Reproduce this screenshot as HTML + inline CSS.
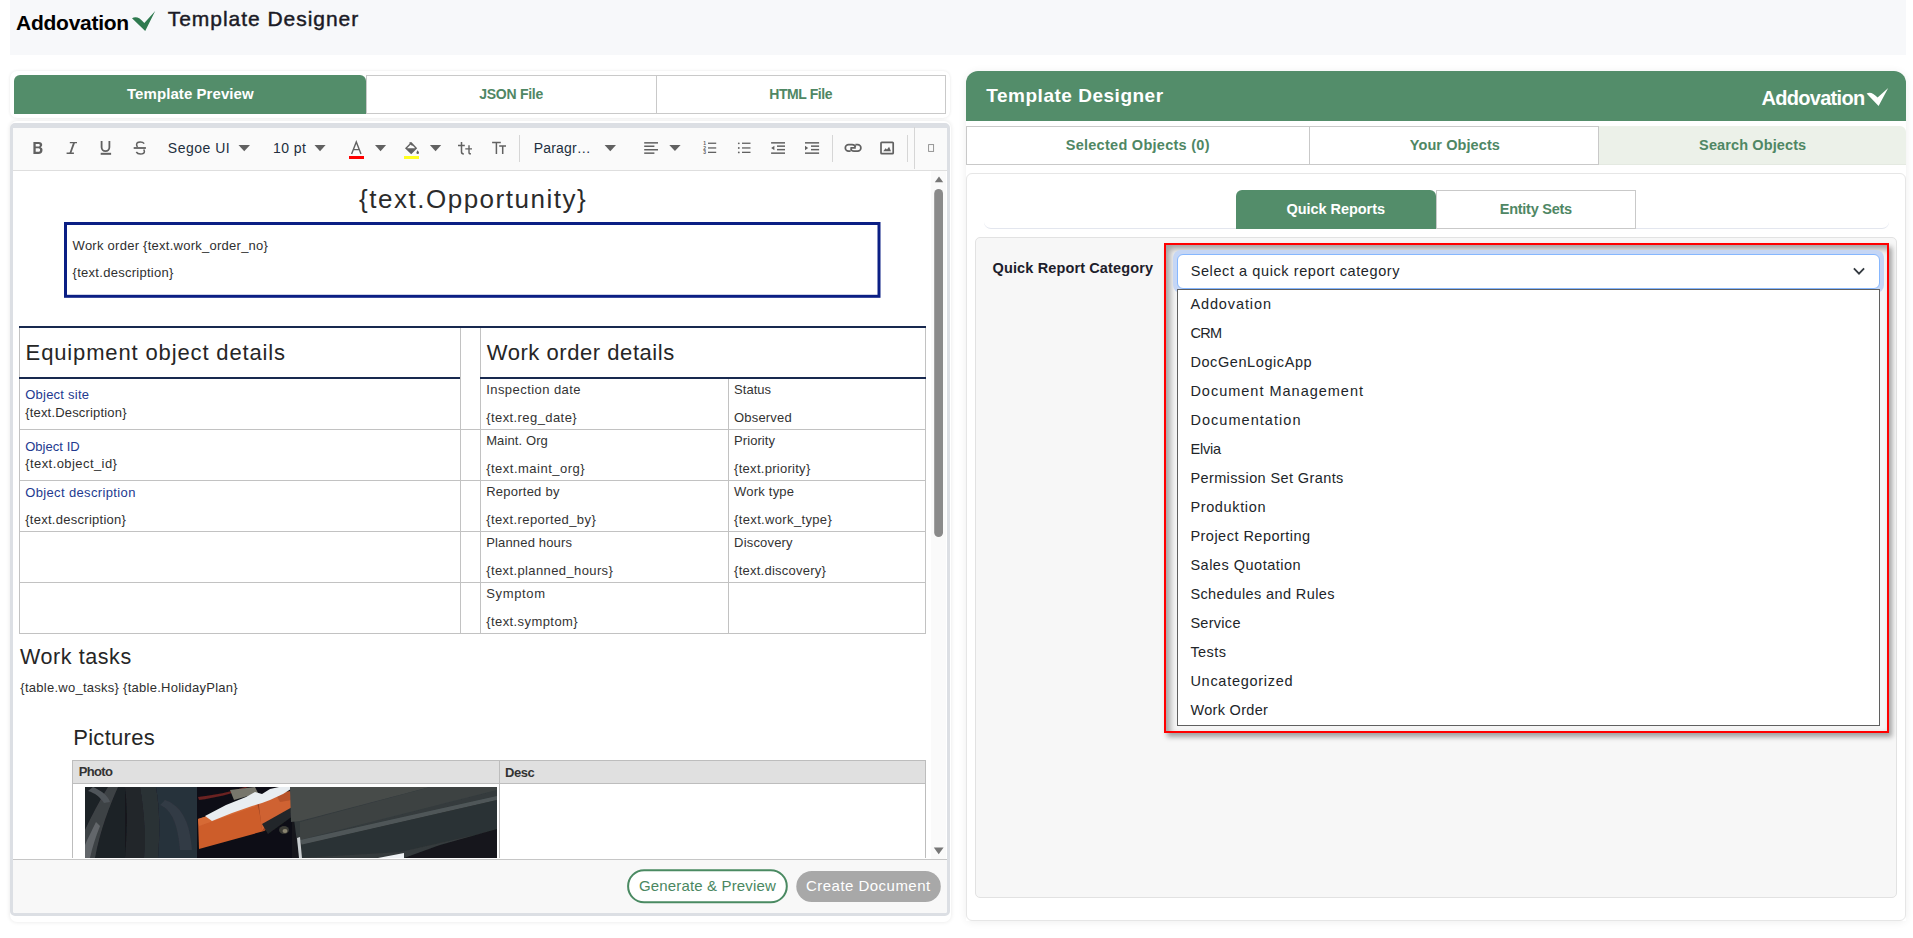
<!DOCTYPE html>
<html><head><meta charset="utf-8">
<style>
html,body{margin:0;padding:0;width:1913px;height:938px;overflow:hidden;background:#fff;font-family:"Liberation Sans",sans-serif;}
.a{position:absolute;box-sizing:border-box;}
.tx{position:absolute;white-space:pre;line-height:1;z-index:50;font-family:"Liberation Sans",sans-serif;}
#ov{position:absolute;left:0;top:0;z-index:40;}
</style></head><body>
<!-- header -->
<div class="a" style="left:10px;top:0;width:1896px;height:55px;background:#f7f8fa;"></div>

<!-- LEFT: tab card -->
<div class="a" style="left:10px;top:71px;width:940px;height:47px;background:#fff;border-radius:7px;box-shadow:0 0 3px rgba(0,0,0,.10);"></div>
<div class="a" style="left:14px;top:75px;width:352px;height:39px;background:#538d6a;border-radius:6px 6px 0 0;"></div>
<div class="a" style="left:366px;top:75px;width:291px;height:39px;border:1px solid #c9c9c9;background:#fff;"></div>
<div class="a" style="left:656px;top:75px;width:290px;height:39px;border:1px solid #c9c9c9;background:#fff;"></div>

<!-- LEFT: editor card -->
<div class="a" style="left:10px;top:121px;width:941px;height:801px;background:#fff;border-radius:7px;box-shadow:0 0 4px rgba(0,0,0,.10);"></div>
<div class="a" style="left:10px;top:123px;width:940px;height:793px;border:3px solid #dcdfe4;border-top-width:5px;border-radius:5px;background:#fff;overflow:hidden;">
  <div class="a" style="left:0;top:0;width:934px;height:43px;background:#fafafa;border-bottom:1px solid #dedede;"></div>
  <div class="a" style="left:918px;top:43px;width:15px;height:688px;background:#fafafa;"></div>
  <div class="a" style="left:0;top:731px;width:934px;height:60px;background:#f8f8f8;border-top:1px solid #c6c6c6;"></div>
</div>

<!-- RIGHT -->
<div class="a" style="left:966px;top:71px;width:940px;height:850px;border-radius:12px 12px 6px 6px;box-shadow:0 1px 8px rgba(0,0,0,.07);"></div>
<div class="a" style="left:966px;top:71px;width:940px;height:50px;background:#538d6a;border-radius:12px 12px 0 0;"></div>
<div class="a" style="left:966px;top:121px;width:940px;height:800px;background:#fff;"></div>
<div class="a" style="left:966px;top:126px;width:344px;height:39px;border:1px solid #c9c9c9;background:#fff;"></div>
<div class="a" style="left:1309px;top:126px;width:290px;height:39px;border:1px solid #c9c9c9;background:#fff;"></div>
<div class="a" style="left:1599px;top:126px;width:307px;height:39px;background:#ecf1e9;border-radius:0 6px 0 0;border-bottom:1px solid #e4e9e1;"></div>

<div class="a" style="left:966px;top:173px;width:940px;height:748px;border:1px solid #e6e6e6;border-radius:6px;background:#fff;"></div>
<div class="a" style="left:984px;top:180px;width:905px;height:49px;border-bottom:1px solid #e3e6ee;border-radius:0 0 7px 7px;"></div>
<div class="a" style="left:1236px;top:190px;width:200px;height:39px;background:#538d6a;border-radius:6px 6px 0 0;"></div>
<div class="a" style="left:1436px;top:190px;width:200px;height:39px;border:1px solid #c9c9c9;background:#fff;"></div>

<div class="a" style="left:975px;top:237px;width:922px;height:661px;border:1px solid #e2e2e2;border-radius:5px;background:#f7f7f7;"></div>

<!-- red annotation box with dropdown -->
<div class="a" style="left:1164px;top:243px;width:725px;height:490px;border:2px solid #ff0000;background:#f5f5f5;box-shadow:3px 4px 5px rgba(0,0,0,.35), inset 4px 4px 6px rgba(0,0,0,.35);"></div>
<div class="a" style="left:1173px;top:250px;width:711px;height:43px;border-radius:8px;background:#c5d6f5;"></div>
<div class="a" style="left:1177px;top:254px;width:703px;height:35px;border:1px solid #86b7fe;border-radius:6px;background:#fff;"></div>
<div class="a" style="left:1177px;top:289px;width:703px;height:437px;border:1px solid #5f5f5f;background:#fff;"></div>

<svg id="ov" width="1913" height="938" viewBox="0 0 1913 938">
 <!-- logo check -->
 <path d="M132,18.3 C135.5,16.2 139.5,17.2 144.3,23 L155.2,11 L145.2,31 Z" fill="#2f7a4f"/>
 <!-- right logo check (white) -->
 <path d="M1866.6,93.6 C1869.6,91.8 1873,92.6 1877.6,97.6 L1888.2,88 L1878.6,106 Z" fill="#fff"/>

 <!-- toolbar icons -->
 <g fill="none" stroke="#616161" stroke-width="1.5">
  <!-- I -->
  <path d="M69.8,142.6 H77 M66.6,153.2 H73.9" stroke-width="1.4"/><path d="M74.1,142.6 L70.3,153.2" stroke-width="1.8"/>
  <!-- U -->
  <path d="M101.6,141 V147.3 A3.9,3.9 0 0 0 109.4,147.3 V141" stroke-width="1.8"/>
  <!-- S -->
  <path d="M144.2,143.7 C143.4,142.5 142.1,142 140.2,142 C138,142 136.6,143.1 136.6,144.7 C136.6,145.6 137,146.3 137.6,146.9" stroke-width="1.5"/>
  <path d="M143.6,149.6 C144.1,150.2 144.4,150.8 144.4,151.4 C144.4,153 143,153.9 140.4,153.9 C138.5,153.9 137.1,153.3 136.3,152" stroke-width="1.5"/>
  <!-- A -->
  <path d="M351.6,154 L356.3,142 L361,154 M353.2,149.6 H359.4" stroke-width="1.4"/>
  <!-- bucket -->
  <path d="M409.6,142.4 L412.6,145.4 M406,148.3 L411.3,143.1 L416.2,148.2 L411.2,153.2 Z" stroke-width="1.4"/>
  <!-- tt -->
  <path d="M461.5,141.9 V152 C461.5,153.3 462.3,153.9 463.8,153.9 M458,145.4 H464.8" stroke-width="1.5"/>
  <path d="M469,145.2 V152.4 C469,153.4 469.7,153.9 471,153.9 M465.3,148.9 H472" stroke-width="1.4"/>
  <!-- TT -->
  <path d="M492.1,142.6 H500.8 M496.4,142.6 V154 M499.2,146.1 H506 M502.7,146.1 V154" stroke-width="1.5"/>
  <!-- link -->
  <path d="M850.6,151.2 h-2 a3.3,3.3 0 0 1 0,-6.6 h3.6 a3.3,3.3 0 0 1 3.2,2.6 M855.4,144.6 h2.2 a3.3,3.3 0 0 1 0,6.6 h-3.6 a3.3,3.3 0 0 1 -3.2,-2.6 M850.4,147.9 h5.4" stroke-width="1.7"/>
  <!-- image -->
  <rect x="881" y="142.3" width="12.2" height="11.4" rx="0.8" stroke-width="1.7"/>
  <!-- small rect -->
  <rect x="928.6" y="144.6" width="5" height="6.8" stroke="#8a8a8a" stroke-width="0.9"/>
 </g>
 <g fill="#616161">
  <!-- B -->
  <path fill-rule="evenodd" d="M33.4,141.9 H38.8 C41,141.9 42.2,143 42.2,144.8 C42.2,146 41.6,146.8 40.6,147.2 C41.9,147.6 42.5,148.6 42.5,149.9 C42.5,152.3 41,153.9 38.4,153.9 H33.4 Z M35.7,143.9 V146.5 H38.4 C39.3,146.5 39.8,146 39.8,145.2 C39.8,144.4 39.3,143.9 38.4,143.9 Z M35.7,148.3 V151.8 H38.5 C39.5,151.8 40.1,151.1 40.1,150 C40.1,149 39.5,148.3 38.5,148.3 Z"/>
  <!-- underline -->
  <rect x="100.7" y="152.8" width="10.4" height="2"/>
  <!-- strike -->
  <rect x="133.7" y="147.1" width="12.2" height="1.8"/>
  <!-- carets -->
  <path d="M238.5,144.9 H250 L244.25,151.2 Z"/>
  <path d="M314.5,144.9 H325.6 L320.05,151.2 Z"/>
  <path d="M375,144.9 H386.1 L380.55,151.2 Z"/>
  <path d="M429.9,144.9 H441.2 L435.55,151.2 Z"/>
  <path d="M604.6,144.9 H616 L610.3,151.2 Z"/>
  <path d="M669.3,145 H680.6 L674.95,150.9 Z"/>
  <!-- bucket fill + drop -->
  <path d="M406.3,148.3 H416 L411.2,153.1 Z"/>
  <path d="M417.6,150.2 C418.8,151.6 419,152.4 419,152.8 A1.3,1.3 0 0 1 416.4,152.8 C416.4,152.4 416.6,151.6 417.6,150.2 Z"/>
  <!-- align -->
  <rect x="644.2" y="142.1" width="13.8" height="1.5"/><rect x="644.2" y="145.5" width="10.2" height="1.5"/>
  <rect x="644.2" y="149" width="13.8" height="1.5"/><rect x="644.2" y="152.4" width="10.2" height="1.5"/>
  <!-- OL -->
  <rect x="708" y="142.6" width="8.2" height="1.3"/><rect x="708" y="147.3" width="8.2" height="1.3"/><rect x="708" y="151.7" width="8.2" height="1.3"/>
  <text x="703.3" y="145.3" font-size="5" font-weight="700" font-family="Liberation Sans">1</text>
  <text x="703.3" y="149.8" font-size="5" font-weight="700" font-family="Liberation Sans">2</text>
  <text x="703.3" y="154.3" font-size="5" font-weight="700" font-family="Liberation Sans">3</text>
  <!-- UL -->
  <circle cx="738.8" cy="143.3" r="0.9"/><circle cx="738.8" cy="148" r="0.9"/><circle cx="738.8" cy="152.4" r="0.9"/>
  <rect x="742" y="142.6" width="8.5" height="1.3"/><rect x="742" y="147.3" width="8.5" height="1.3"/><rect x="742" y="151.7" width="8.5" height="1.3"/>
  <!-- outdent -->
  <rect x="771.1" y="142.1" width="13.9" height="1.5"/><rect x="777" y="145.4" width="8" height="1.5"/>
  <rect x="777" y="148.9" width="8" height="1.5"/><rect x="771.1" y="152.4" width="13.9" height="1.5"/>
  <path d="M771.2,148 L774.4,145.8 V150.2 Z"/>
  <!-- indent -->
  <rect x="805" y="142.1" width="14.1" height="1.5"/><rect x="811" y="145.4" width="8.1" height="1.5"/>
  <rect x="811" y="148.9" width="8.1" height="1.5"/><rect x="805" y="152.4" width="14.1" height="1.5"/>
  <path d="M808.2,148 L805,145.8 V150.2 Z"/>
  <!-- image mountains -->
  <path d="M883.2,151.3 L885.6,148.3 L887,149.6 L889.1,146.8 L891,151.3 Z"/>
 </g>
 <!-- color bars -->
 <rect x="349" y="156" width="15" height="3" fill="#ff0000"/>
 <rect x="404" y="156" width="15" height="3" fill="#ffff20"/>
 <!-- separators -->
 <g fill="#d6d6d6">
  <rect x="519" y="135" width="1" height="27"/>
  <rect x="832" y="135" width="1" height="27"/>
  <rect x="907" y="135" width="1" height="27"/>
  <rect x="914" y="127" width="1" height="42"/>
 </g>
 <!-- scrollbar -->
 <path d="M934.8,182.3 H943.2 L939,176.6 Z" fill="#777"/>
 <rect x="934.2" y="189" width="8.8" height="348" rx="4.4" fill="#8a8a8a"/>
 <path d="M933.8,847.4 H943.6 L938.7,854.2 Z" fill="#777"/>

 <!-- chevron -->
 <path d="M1853.9,268.3 L1859,273.6 L1864.1,268.3" fill="none" stroke="#343a40" stroke-width="1.8"/>

 <!-- content: navy box -->
 <rect x="65.5" y="223.5" width="813.5" height="72.8" fill="none" stroke="#0b1f84" stroke-width="3"/>

 <!-- table -->
 <g fill="#c2c2c2">
  <rect x="19" y="327" width="1" height="307"/>
  <rect x="460" y="327" width="1" height="307"/>
  <rect x="480" y="327" width="1" height="307"/>
  <rect x="925" y="327" width="1" height="307"/>
  <rect x="728" y="379" width="1" height="255"/>
  <rect x="19" y="429" width="907" height="1"/>
  <rect x="19" y="480" width="907" height="1"/>
  <rect x="19" y="531" width="907" height="1"/>
  <rect x="19" y="582" width="907" height="1"/>
  <rect x="19" y="633" width="907" height="1"/>
 </g>
 <g fill="#18294f">
  <rect x="19" y="326" width="907" height="2"/>
  <rect x="19" y="377" width="441" height="2"/>
  <rect x="480" y="377" width="446" height="2"/>
 </g>

 <!-- pictures table -->
 <rect x="72" y="760" width="854" height="24" fill="#e0e0e0"/>
 <g fill="#bdbdbd">
  <rect x="72" y="760" width="854" height="1"/>
  <rect x="72" y="783" width="854" height="1"/>
  <rect x="72" y="760" width="1" height="98"/>
  <rect x="499" y="760" width="1" height="98"/>
  <rect x="925" y="760" width="1" height="98"/>
 </g>
 <!-- photo -->
 <defs>
  <filter id="bl" x="-5%" y="-5%" width="110%" height="110%"><feGaussianBlur stdDeviation="0.7"/></filter><clipPath id="pc"><rect x="85" y="787" width="412" height="71"/></clipPath>
  <linearGradient id="lg1" x1="0" y1="0" x2="1" y2="0">
   <stop offset="0" stop-color="#1b1e23"/><stop offset="0.5" stop-color="#30343a"/><stop offset="1" stop-color="#181b20"/>
  </linearGradient>
 </defs>
 <g clip-path="url(#pc)"><g filter="url(#bl)">
  <rect x="85" y="787" width="412" height="71" fill="#14171c"/>
  <!-- left wheel area -->
  <rect x="85" y="787" width="40" height="71" fill="#1d2126"/>
  <path d="M85,858 L85,830 C92,815 100,800 108,787 L118,787 C110,805 100,830 95,858 Z" fill="#3e4245"/>
  <path d="M85,858 L85,845 C88,838 92,830 96,822 L100,826 C96,836 92,848 90,858 Z" fill="#62666a"/>
  <path d="M125,787 H140 C144,810 146,835 144,858 H125 C127,835 128,810 125,787 Z" fill="#23272b"/>
  <path d="M140,787 H156 C160,810 160,835 158,858 H144 C146,835 144,810 140,787 Z" fill="#2c3136"/>
  <path d="M156,787 H198 V858 H158 C160,835 160,810 156,787 Z" fill="#28303a"/>
  <path d="M165,800 C180,805 190,820 192,850 L180,850 C178,825 172,810 160,805 Z" fill="#323a44"/>
  <path d="M93,787 C100,790 108,795 110,802 L104,803 C100,797 95,793 88,791 Z" fill="#50555a"/>
  <!-- dark middle -->
  <rect x="197" y="787" width="95" height="71" fill="#0d0f15"/>
  <path d="M198,797 C215,795 230,792 245,787 L248,787 C232,794 215,798 199,800 Z" fill="#6a2020"/>
  <!-- orange cylinder -->
  <path d="M198,819 L254,801 L258,797 L272,794 L291,792 L292,808 L276,822 L264,831 L199,849 Z" fill="#cd5d2c"/>
  <path d="M198,819 L254,801 L256,806 L199,826 Z" fill="#d66a36"/>
  <path d="M256,800 C259,808 261,820 262,831 L266,830 C264,818 262,806 259,799 Z" fill="#9e4422"/>
  <path d="M258,797 L291,793 L292,809 L268,822 L262,831 Z" fill="#cf6232"/>
  <path d="M275,793 L291,791 L292,800 L280,802 Z" fill="#b8532a"/>
  <!-- metal fitting -->
  <path d="M230,790 L255,787 L258,793 L234,800 Z" fill="#77766c"/>
  <!-- snow -->
  <path d="M205,816 L226,805 L246,797 L255,792 L262,794 L270,789 L279,787 L294,787 L283,794 L270,800 L262,803 L252,806 L232,813 L212,821 Z" fill="#e8edf1"/>
  <!-- bracket -->
  <path d="M262,824 L294,806 L297,813 L268,834 Z" fill="#232629"/>
  <ellipse cx="284" cy="830" rx="5" ry="4" fill="#3a3a36"/>
  <ellipse cx="285" cy="831" rx="2.5" ry="2" fill="#8a8470"/>
  <!-- right beam -->
  <path d="M290,787 H497 V858 H300 L296,835 Z" fill="#343a3c"/>
  <path d="M290,787 H430 L300,821 L291,822 Z" fill="#474b4a"/>
  <path d="M430,787 H497 V790 L300,840 L300,822 Z" fill="#3c4243"/>
  <path d="M300,840 L497,796 V800 L302,845 Z" fill="#4f5759"/>
  <path d="M300,845 L497,800 V830 L440,843 L400,852 L300,858 Z" fill="#2c3234"/>
  <path d="M404,858 L440,845 L497,829 V858 Z" fill="#16171c"/>
  <path d="M378,858 L404,853 L404,858 Z" fill="#eef1f4"/>
  <path d="M297,838 L300,837 L302,858 L299,858 Z" fill="#c9cdd0"/></g>
 </g>

 <!-- footer buttons -->
 <rect x="628.1" y="870.2" width="158.7" height="32.1" rx="16" fill="#fff" stroke="#4a8a62" stroke-width="2"/>
 <rect x="796.3" y="871" width="144.5" height="31.1" rx="15.5" fill="#a8a8a8"/>
</svg>

<span class="tx" style="left:16.10px;top:12px;font-size:21px;font-weight:700;color:#000;letter-spacing:-0.274px;">Addovation</span>
<span class="tx" style="left:167.70px;top:8px;font-size:21px;font-weight:400;color:#1b1b26;letter-spacing:0.963px;-webkit-text-stroke:0.45px #1b1b26;">Template Designer</span>
<span class="tx" style="left:127.00px;top:86px;font-size:15px;font-weight:700;color:#fff;letter-spacing:0.070px;">Template Preview</span>
<span class="tx" style="left:479.20px;top:87px;font-size:14px;font-weight:700;color:#4f8764;letter-spacing:-0.256px;">JSON File</span>
<span class="tx" style="left:769.30px;top:87px;font-size:14px;font-weight:700;color:#4f8764;letter-spacing:-0.425px;">HTML File</span>
<span class="tx" style="left:167.80px;top:141px;font-size:14px;font-weight:400;color:#222f3e;letter-spacing:0.503px;">Segoe UI</span>
<span class="tx" style="left:273.00px;top:141px;font-size:14px;font-weight:400;color:#222f3e;letter-spacing:0.438px;">10 pt</span>
<span class="tx" style="left:533.80px;top:141px;font-size:14px;font-weight:400;color:#222f3e;letter-spacing:0.163px;">Paragr…</span>
<span class="tx" style="left:359.00px;top:186px;font-size:26px;font-weight:400;color:#2b2b2b;letter-spacing:1.516px;">{text.Opportunity}</span>
<span class="tx" style="left:72.60px;top:239px;font-size:13px;font-weight:400;color:#2f2f2f;letter-spacing:0.257px;">Work order {text.work_order_no}</span>
<span class="tx" style="left:72.60px;top:266px;font-size:13px;font-weight:400;color:#2f2f2f;letter-spacing:0.272px;">{text.description}</span>
<span class="tx" style="left:25.60px;top:342px;font-size:22px;font-weight:400;color:#262626;letter-spacing:0.861px;">Equipment object details</span>
<span class="tx" style="left:486.80px;top:342px;font-size:22px;font-weight:400;color:#262626;letter-spacing:0.547px;">Work order details</span>
<span class="tx" style="left:25.20px;top:388px;font-size:13px;font-weight:400;color:#233a8f;letter-spacing:0.242px;">Object site</span>
<span class="tx" style="left:25.20px;top:406px;font-size:13px;font-weight:400;color:#2f2f2f;letter-spacing:0.180px;">{text.Description}</span>
<span class="tx" style="left:25.20px;top:440px;font-size:13px;font-weight:400;color:#233a8f;letter-spacing:0.038px;">Object ID</span>
<span class="tx" style="left:25.20px;top:457px;font-size:13px;font-weight:400;color:#2f2f2f;letter-spacing:0.430px;">{text.object_id}</span>
<span class="tx" style="left:25.20px;top:486px;font-size:13px;font-weight:400;color:#233a8f;letter-spacing:0.363px;">Object description</span>
<span class="tx" style="left:25.20px;top:513px;font-size:13px;font-weight:400;color:#2f2f2f;letter-spacing:0.272px;">{text.description}</span>
<span class="tx" style="left:486.20px;top:383px;font-size:13px;font-weight:400;color:#333;letter-spacing:0.440px;">Inspection date</span>
<span class="tx" style="left:486.20px;top:411px;font-size:13px;font-weight:400;color:#333;letter-spacing:0.419px;">{text.reg_date}</span>
<span class="tx" style="left:734.10px;top:383px;font-size:13px;font-weight:400;color:#333;letter-spacing:0.029px;">Status</span>
<span class="tx" style="left:734.10px;top:411px;font-size:13px;font-weight:400;color:#333;letter-spacing:0.167px;">Observed</span>
<span class="tx" style="left:486.20px;top:434px;font-size:13px;font-weight:400;color:#333;letter-spacing:0.105px;">Maint. Org</span>
<span class="tx" style="left:486.20px;top:462px;font-size:13px;font-weight:400;color:#333;letter-spacing:0.486px;">{text.maint_org}</span>
<span class="tx" style="left:734.10px;top:434px;font-size:13px;font-weight:400;color:#333;letter-spacing:0.050px;">Priority</span>
<span class="tx" style="left:734.10px;top:462px;font-size:13px;font-weight:400;color:#333;letter-spacing:0.278px;">{text.priority}</span>
<span class="tx" style="left:486.20px;top:485px;font-size:13px;font-weight:400;color:#333;letter-spacing:0.238px;">Reported by</span>
<span class="tx" style="left:486.20px;top:513px;font-size:13px;font-weight:400;color:#333;letter-spacing:0.407px;">{text.reported_by}</span>
<span class="tx" style="left:734.10px;top:485px;font-size:13px;font-weight:400;color:#333;letter-spacing:0.207px;">Work type</span>
<span class="tx" style="left:734.10px;top:513px;font-size:13px;font-weight:400;color:#333;letter-spacing:0.343px;">{text.work_type}</span>
<span class="tx" style="left:486.20px;top:536px;font-size:13px;font-weight:400;color:#333;letter-spacing:0.163px;">Planned hours</span>
<span class="tx" style="left:486.20px;top:564px;font-size:13px;font-weight:400;color:#333;letter-spacing:0.388px;">{text.planned_hours}</span>
<span class="tx" style="left:734.10px;top:536px;font-size:13px;font-weight:400;color:#333;letter-spacing:0.179px;">Discovery</span>
<span class="tx" style="left:734.10px;top:564px;font-size:13px;font-weight:400;color:#333;letter-spacing:0.246px;">{text.discovery}</span>
<span class="tx" style="left:486.20px;top:587px;font-size:13px;font-weight:400;color:#333;letter-spacing:0.655px;">Symptom</span>
<span class="tx" style="left:486.20px;top:615px;font-size:13px;font-weight:400;color:#333;letter-spacing:0.420px;">{text.symptom}</span>
<span class="tx" style="left:20.00px;top:647px;font-size:21.5px;font-weight:400;color:#262626;letter-spacing:0.581px;">Work tasks</span>
<span class="tx" style="left:20.30px;top:681px;font-size:13px;font-weight:400;color:#2f2f2f;letter-spacing:0.263px;">{table.wo_tasks} {table.HolidayPlan}</span>
<span class="tx" style="left:73.20px;top:727px;font-size:22px;font-weight:400;color:#262626;letter-spacing:0.304px;">Pictures</span>
<span class="tx" style="left:78.80px;top:765px;font-size:13px;font-weight:700;color:#333;letter-spacing:-0.695px;">Photo</span>
<span class="tx" style="left:505.00px;top:766px;font-size:13px;font-weight:700;color:#333;letter-spacing:-0.449px;">Desc</span>
<span class="tx" style="left:639.00px;top:878px;font-size:15px;font-weight:400;color:#4a8761;letter-spacing:0.153px;">Generate &amp; Preview</span>
<span class="tx" style="left:806.00px;top:878px;font-size:15px;font-weight:400;color:#fff;letter-spacing:0.472px;">Create Document</span>
<span class="tx" style="left:986.30px;top:86px;font-size:19px;font-weight:700;color:#fff;letter-spacing:0.513px;">Template Designer</span>
<span class="tx" style="left:1761.50px;top:88px;font-size:20px;font-weight:700;color:#fff;letter-spacing:-0.708px;">Addovation</span>
<span class="tx" style="left:1065.70px;top:138px;font-size:14.5px;font-weight:700;color:#4f8764;letter-spacing:0.275px;">Selected Objects (0)</span>
<span class="tx" style="left:1409.80px;top:138px;font-size:14.5px;font-weight:700;color:#4f8764;letter-spacing:0.082px;">Your Objects</span>
<span class="tx" style="left:1699.10px;top:138px;font-size:14.5px;font-weight:700;color:#4f8764;letter-spacing:0.114px;">Search Objects</span>
<span class="tx" style="left:1286.50px;top:202px;font-size:14.5px;font-weight:700;color:#fff;letter-spacing:-0.045px;">Quick Reports</span>
<span class="tx" style="left:1499.80px;top:202px;font-size:14.5px;font-weight:700;color:#4f8764;letter-spacing:-0.267px;">Entity Sets</span>
<span class="tx" style="left:992.60px;top:261px;font-size:14.5px;font-weight:700;color:#1d1d2b;letter-spacing:0.122px;">Quick Report Category</span>
<span class="tx" style="left:1190.70px;top:264px;font-size:14.5px;font-weight:400;color:#212529;letter-spacing:0.584px;">Select a quick report category</span>
<span class="tx" style="left:1190.40px;top:297px;font-size:14.5px;font-weight:400;color:#212529;letter-spacing:0.890px;">Addovation</span>
<span class="tx" style="left:1190.40px;top:326px;font-size:14.5px;font-weight:400;color:#212529;letter-spacing:-0.721px;">CRM</span>
<span class="tx" style="left:1190.40px;top:355px;font-size:14.5px;font-weight:400;color:#212529;letter-spacing:0.585px;">DocGenLogicApp</span>
<span class="tx" style="left:1190.40px;top:384px;font-size:14.5px;font-weight:400;color:#212529;letter-spacing:0.993px;">Document Management</span>
<span class="tx" style="left:1190.40px;top:413px;font-size:14.5px;font-weight:400;color:#212529;letter-spacing:1.045px;">Documentation</span>
<span class="tx" style="left:1190.40px;top:442px;font-size:14.5px;font-weight:400;color:#212529;letter-spacing:-0.166px;">Elvia</span>
<span class="tx" style="left:1190.40px;top:471px;font-size:14.5px;font-weight:400;color:#212529;letter-spacing:0.395px;">Permission Set Grants</span>
<span class="tx" style="left:1190.40px;top:500px;font-size:14.5px;font-weight:400;color:#212529;letter-spacing:0.638px;">Produktion</span>
<span class="tx" style="left:1190.40px;top:529px;font-size:14.5px;font-weight:400;color:#212529;letter-spacing:0.484px;">Project Reporting</span>
<span class="tx" style="left:1190.40px;top:558px;font-size:14.5px;font-weight:400;color:#212529;letter-spacing:0.506px;">Sales Quotation</span>
<span class="tx" style="left:1190.40px;top:587px;font-size:14.5px;font-weight:400;color:#212529;letter-spacing:0.390px;">Schedules and Rules</span>
<span class="tx" style="left:1190.40px;top:616px;font-size:14.5px;font-weight:400;color:#212529;letter-spacing:0.286px;">Service</span>
<span class="tx" style="left:1190.40px;top:645px;font-size:14.5px;font-weight:400;color:#212529;letter-spacing:0.452px;">Tests</span>
<span class="tx" style="left:1190.40px;top:674px;font-size:14.5px;font-weight:400;color:#212529;letter-spacing:0.730px;">Uncategorized</span>
<span class="tx" style="left:1190.40px;top:703px;font-size:14.5px;font-weight:400;color:#212529;letter-spacing:0.319px;">Work Order</span>
</body></html>
